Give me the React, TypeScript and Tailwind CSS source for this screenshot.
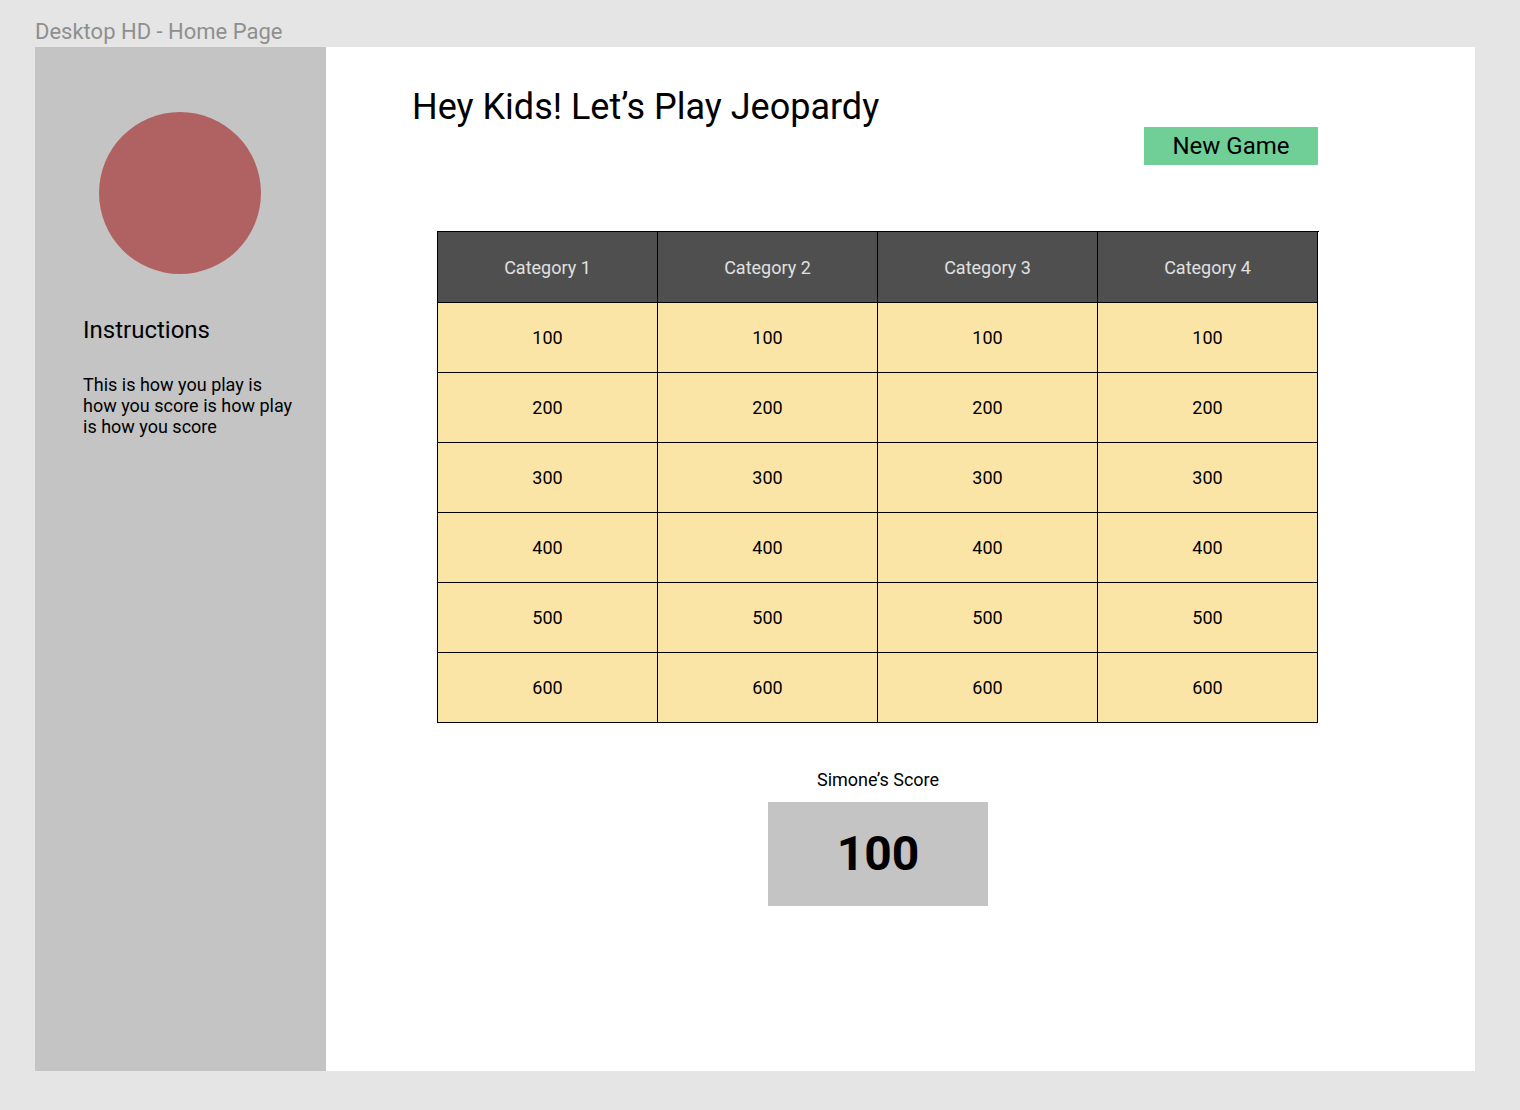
const categories = ['Category 1', 'Category 2', 'Category 3', 'Category 4'];
const values = [100, 200, 300, 400, 500, 600];

export default function App() {
  return (
    <div className="min-h-[1110px] bg-[#e5e5e5] pl-[35px] pt-[19px] font-['Roboto',sans-serif]">
      <div className="h-[28px] text-[22px] leading-[26px] text-[#8f8f8f]">Desktop HD - Home Page</div>

      <div className="flex h-[1024px] w-[1440px]">
        {/* Sidebar */}
        <aside className="w-[291px] shrink-0 bg-[#c4c4c4] pt-[65px]">
          <div className="ml-[64px] h-[162px] w-[162px] rounded-full bg-[#b06262]" />
          <h2 className="ml-[48px] mt-[42px] text-[24px] leading-[28px] text-black">Instructions</h2>
          <p className="ml-[48px] mt-[30px] w-[213px] text-[18px] leading-[21px] text-black">
            This is how you play is how you score is how play is how you score
          </p>
        </aside>

        {/* Main */}
        <main className="flex-1 bg-white pl-[86px] pt-[39px]">
          <div className="flex w-[906px] items-start justify-between">
            <h1 className="text-[36px] leading-[42px] text-black">Hey Kids! Let’s Play Jeopardy</h1>
            <button className="mt-[41px] h-[38px] w-[174px] bg-[#6fcf97] text-[24px] leading-[28px] text-black">
              New Game
            </button>
          </div>

          <div className="ml-[25px] mt-[66px] w-[882px]">
            <div className="grid grid-cols-[repeat(4,220px)] border-l border-t border-black">
              {categories.map((c) => (
                <div
                  key={c}
                  className="flex h-[71px] items-center justify-center border-b border-r border-black bg-[#4f4f4f] text-[18px] text-[#e0e0e0]"
                >
                  {c}
                </div>
              ))}
              {values.map((v) =>
                categories.map((c) => (
                  <div
                    key={c + v}
                    className="flex h-[70px] items-center justify-center border-b border-r border-black bg-[#fbe5a6] text-[18px] text-black"
                  >
                    {v}
                  </div>
                ))
              )}
            </div>

            <div className="mt-[46px] flex flex-col items-center">
              <div className="text-[18px] leading-[21px] text-black">Simone’s Score</div>
              <div className="mt-[12px] flex h-[104px] w-[220px] items-center justify-center bg-[#c4c4c4] text-[48px] font-bold text-black">
                100
              </div>
            </div>
          </div>
        </main>
      </div>
    </div>
  );
}
